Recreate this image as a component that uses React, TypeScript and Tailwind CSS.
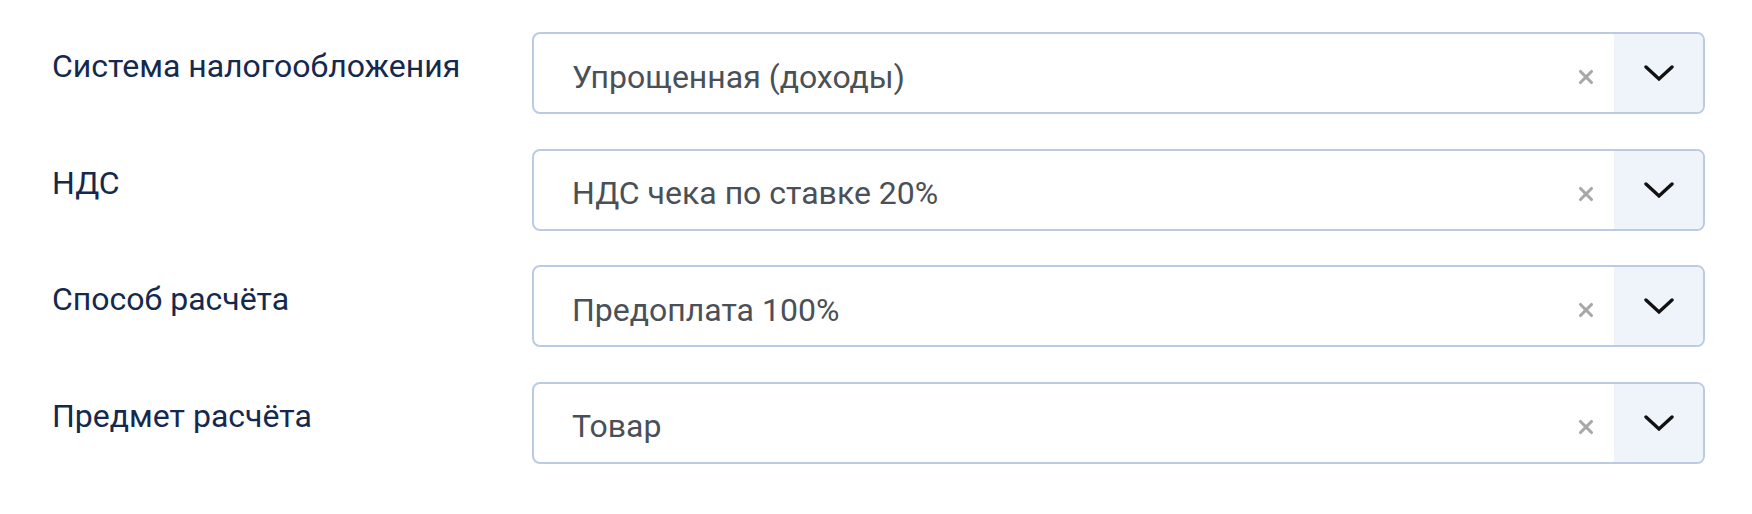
import { X } from 'lucide-react';

const rows = [
  { label: 'Система налогообложения', value: 'Упрощенная (доходы)' },
  { label: 'НДС', value: 'НДС чека по ставке 20%' },
  { label: 'Способ расчёта', value: 'Предоплата 100%' },
  { label: 'Предмет расчёта', value: 'Товар' },
];

function Chevron() {
  return (
    <svg width="30" height="18" viewBox="0 0 30 18" fill="none">
      <path d="M2 3 L15 15 L28 3" stroke="#111" strokeWidth="3.4" strokeLinecap="round" />
    </svg>
  );
}

function SelectBox({ value }: { value: string }) {
  return (
    <div className="flex h-[82px] flex-1 overflow-hidden rounded-[8px] border-2 border-[#bccbe3] bg-white">
      <div className="flex flex-1 items-center pl-[38px] pt-[7px] text-[32px] leading-[38px] text-[#4a5057]">
        {value}
      </div>
      <div className="flex w-[56px] items-center justify-center pt-[8px]">
        <X size={22} strokeWidth={3.4} className="text-[#a8a8a8]" />
      </div>
      <div className="flex w-[89px] items-center justify-center bg-[#eff4fb]">
        <Chevron />
      </div>
    </div>
  );
}

export default function App() {
  return (
    <div className="w-[1752px] h-[514px] bg-white pt-[32px] pl-[52px] pr-[47px] font-['Roboto',sans-serif]">
      <div className="flex flex-col gap-[34.5px]">
        {rows.map(r => (
          <div key={r.label} className="flex">
            <div className="w-[480px] pt-[15px] text-[32px] leading-[38px] text-[#14294d]">{r.label}</div>
            <SelectBox value={r.value} />
          </div>
        ))}
      </div>
    </div>
  );
}
